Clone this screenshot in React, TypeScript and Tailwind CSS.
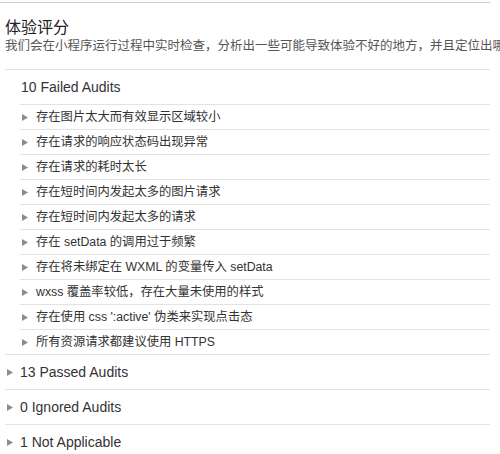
import type React from 'react';

const failed = [
  '存在图片太大而有效显示区域较小',
  '存在请求的响应状态码出现异常',
  '存在请求的耗时太长',
  '存在短时间内发起太多的图片请求',
  '存在短时间内发起太多的请求',
  '存在 setData 的调用过于频繁',
  '存在将未绑定在 WXML 的变量传入 setData',
  'wxss 覆盖率较低，存在大量未使用的样式',
  "存在使用 css ':active' 伪类来实现点击态",
  '所有资源请求都建议使用 HTTPS',
];

const collapsed = ['13 Passed Audits', '0 Ignored Audits', '1 Not Applicable'];

function Arrow() {
  return (
    <svg width="6" height="7" viewBox="0 0 6 7" className="shrink-0">
      <polygon points="0,0 6,3.5 0,7" fill="#8c8c8c" />
    </svg>
  );
}

export default function App() {
  const font: React.CSSProperties = {};
  return (
    <div
      className="h-[454px] w-full overflow-hidden bg-white text-[#333] font-['Liberation_Sans','Noto_Sans_CJK_SC',sans-serif]"
      style={font}
    >
      <div className="w-[490px] pt-[2px]">
        <div className="border-t border-[#cfcfcf] pl-[5px] pt-[15px] pb-[15px]">
          <div className="text-[16px] leading-[20px] text-[#222]">体验评分</div>
          <div className="whitespace-nowrap text-[12.5px] leading-[16px] text-[#555]">
            我们会在小程序运行过程中实时检查，分析出一些可能导致体验不好的地方，并且定位出哪里有问题，以及给出一些优化建议。
          </div>
        </div>

        <div className="ml-[5px]">
          <div className="flex h-[35px] items-center border-t border-[#e3e3e3] pl-[16px] text-[14px]">
            10 Failed Audits
          </div>
          <div className="ml-[15px]">
            {failed.map((t) => (
              <div
                key={t}
                className="flex h-[25px] items-center border-t border-[#e3e3e3] pl-[2px] text-[12.3px]"
              >
                <Arrow />
                <span className="ml-[8px] whitespace-nowrap">{t}</span>
              </div>
            ))}
          </div>
          {collapsed.map((t) => (
            <div
              key={t}
              className="flex h-[35px] items-center border-t border-[#e3e3e3] pl-[2px] text-[14px]"
            >
              <Arrow />
              <span className="ml-[7px]">{t}</span>
            </div>
          ))}
        </div>
      </div>
    </div>
  );
}
